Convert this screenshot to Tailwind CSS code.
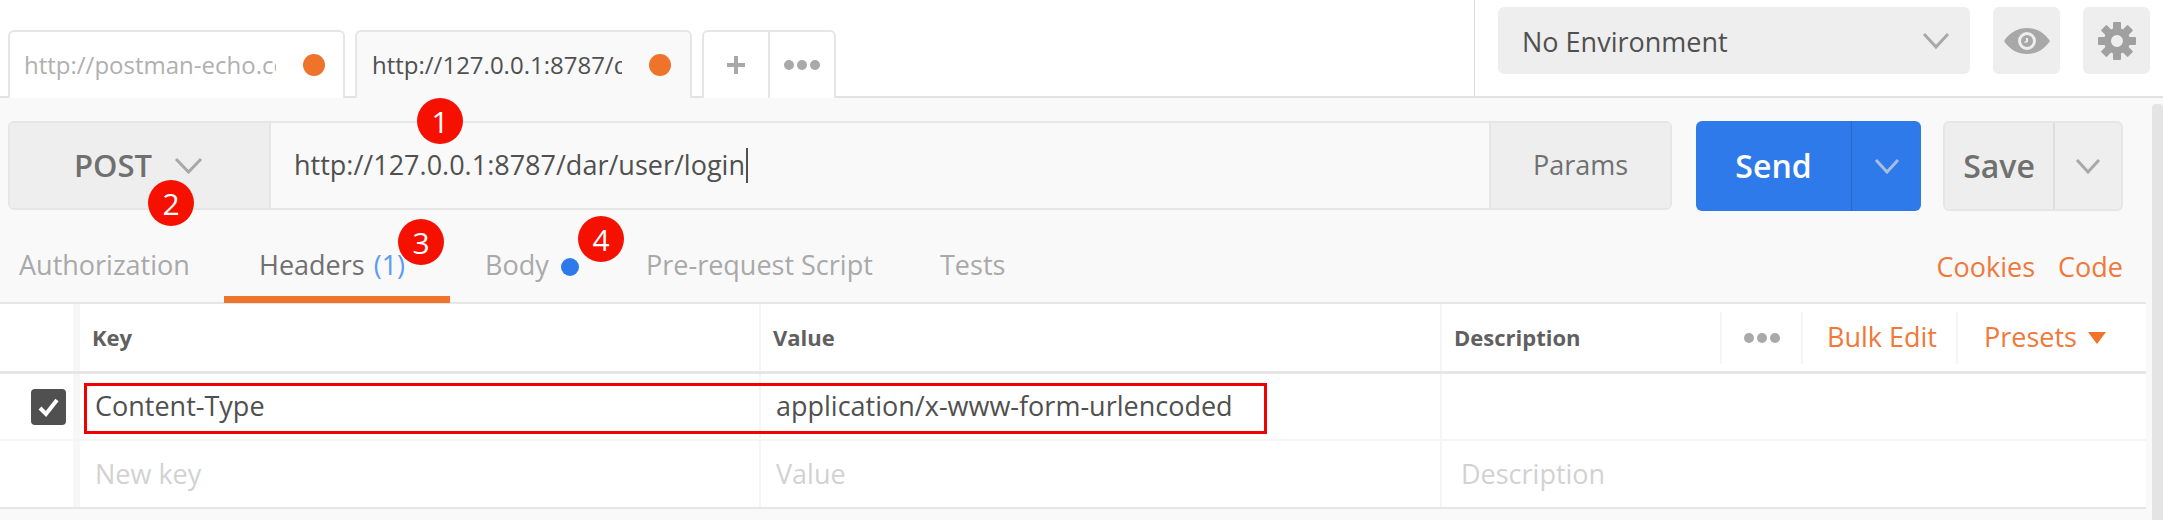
<!DOCTYPE html>
<html><head><meta charset="utf-8">
<script src="https://cdn.jsdelivr.net/npm/@tailwindcss/browser@4"></script>
</head>
<body class="m-0 bg-white">
<div class="relative w-[2163px] h-[520px] overflow-hidden bg-[#f9f9f9] font-['Open_Sans',sans-serif] text-[27px] text-[#505050]">

  <!-- top bar -->
  <div class="flex h-[98px] bg-white border-b-2 border-[#e2e2e2]">
    <div class="flex items-end w-[1475px] pl-2 gap-[10px] border-r border-[#dedede] h-[96px]">
      <div class="flex items-center w-[337px] h-[68px] -mb-[2px] pl-[14px] bg-white border-2 border-b-0 border-[#e6e6e6] rounded-t-md relative z-10">
        <span class="w-[252px] shrink-0 overflow-hidden whitespace-nowrap text-[24px] text-[#b0b0b0]">http://postman-echo.com/post</span>
        <span class="ml-[27px] w-[22px] h-[22px] shrink-0 rounded-full bg-[#f0732c]"></span>
      </div>
      <div class="flex items-center w-[337px] h-[68px] -mb-[2px] pl-[15px] bg-[#f9f9f9] border-2 border-b-0 border-[#e6e6e6] rounded-t-md relative z-10">
        <span class="w-[250px] shrink-0 overflow-hidden whitespace-nowrap text-[24px] text-[#505050]">http://127.0.0.1:8787/dar/user/login</span>
        <span class="ml-[27px] w-[22px] h-[22px] shrink-0 rounded-full bg-[#f0732c]"></span>
      </div>
      <div class="flex h-[68px] -mb-[2px] w-[134px] bg-white border-2 border-b-0 border-[#e6e6e6] rounded-t-md relative z-10">
        <div class="w-[66px] flex items-center justify-center border-r-2 border-[#e6e6e6]">
          <svg width="20" height="20" viewBox="0 0 20 20"><path d="M8 1h4v7h7v4h-7v7H8v-7H1V8h7z" fill="#a9a9a9"/></svg>
        </div>
        <div class="flex-1 flex items-center justify-center gap-[3px]">
          <span class="w-[10px] h-[10px] rounded-full bg-[#a9a9a9]"></span><span class="w-[10px] h-[10px] rounded-full bg-[#a9a9a9]"></span><span class="w-[10px] h-[10px] rounded-full bg-[#a9a9a9]"></span>
        </div>
      </div>
    </div>
    <div class="flex items-start pt-[7px] pl-[23px] gap-[23px]">
      <div class="flex items-center justify-between w-[472px] h-[67px] rounded-md bg-[#eeeeee] pl-[24px] pr-[20px]">
        <span class="pt-[3px]">No Environment</span>
        <svg width="28" height="18" viewBox="0 0 28 18"><path d="M2 2l12 13L26 2" fill="none" stroke="#a8a8a8" stroke-width="3"/></svg>
      </div>
      <div class="flex items-center justify-center w-[67px] h-[67px] rounded-md bg-[#eeeeee]">
        <svg width="46" height="26" viewBox="0 0 46 26"><path fill-rule="evenodd" d="M0 13C6 4 14 0 23 0s17 4 23 13c-6 9-14 13-23 13S6 22 0 13zm23-9a9 9 0 1 0 0 18 9 9 0 0 0 0-18z" fill="#a8a8a8"/><path fill-rule="evenodd" d="M23 7a6 6 0 1 0 0 12 6 6 0 0 0 0-12zm1 3v4l-3 1-1-1 2-1v-3z" fill="#a8a8a8"/></svg>
      </div>
      <div class="flex items-center justify-center w-[67px] h-[67px] rounded-md bg-[#eeeeee]">
        <svg width="40" height="40" viewBox="0 0 40 40"><g fill="#a0a0a0"><path fill-rule="evenodd" d="M20 7a13 13 0 1 0 0 26 13 13 0 0 0 0-26zm0 7a6 6 0 1 1 0 12 6 6 0 0 1 0-12z"/><rect x="16" y="1" width="8" height="9" rx="1"/><rect x="16" y="30" width="8" height="9" rx="1"/><rect x="1" y="16" width="9" height="8" rx="1"/><rect x="30" y="16" width="9" height="8" rx="1"/><rect x="16" y="1" width="8" height="9" rx="1" transform="rotate(45 20 20)"/><rect x="16" y="30" width="8" height="9" rx="1" transform="rotate(45 20 20)"/><rect x="1" y="16" width="9" height="8" rx="1" transform="rotate(45 20 20)"/><rect x="30" y="16" width="9" height="8" rx="1" transform="rotate(45 20 20)"/></g></svg>
      </div>
    </div>
  </div>

  <!-- scrollbar -->
  <div class="absolute right-0 top-[104px] w-[11px] h-[416px] rounded-t bg-[#e4e4e4]"></div>

  <div class="w-[2146px]">
    <!-- request row -->
    <div class="flex h-[90px] mt-[23px] pl-2">
      <div class="flex w-[1664px] h-[89px] border-2 border-[#e6e6e6] rounded-md overflow-hidden">
        <div class="flex items-center w-[261px] bg-[#eeeeee] border-r-2 border-[#e6e6e6] pl-[64px] shrink-0">
          <span class="text-[31px] font-semibold text-[#707070]">POST</span>
          <svg class="ml-[22px]" width="29" height="17" viewBox="0 0 29 17"><path d="M2 2l12.500 13L27 2" fill="none" stroke="#a8a8a8" stroke-width="3"/></svg>
        </div>
        <div class="flex items-center flex-1 pl-[23px]">
          <span class="whitespace-nowrap">http://127.0.0.1:8787/dar/user/login</span><span class="w-[2px] h-[35px] bg-[#505050] ml-px"></span>
        </div>
        <div class="flex items-center justify-center w-[181px] bg-[#eeeeee] border-l-2 border-[#e6e6e6] text-[#707070]">Params</div>
      </div>
      <div class="flex w-[225px] h-[90px] ml-[24px] rounded-md bg-[#2f7aeb] text-white">
        <div class="flex items-center justify-center w-[156px] border-r border-[#2a69c8] text-[32px] font-semibold">Send</div>
        <div class="flex items-center justify-center flex-1">
          <svg width="26" height="16" viewBox="0 0 26 16"><path d="M2 2l11 12L24 2" fill="none" stroke="#a9bedd" stroke-width="3"/></svg>
        </div>
      </div>
      <div class="flex w-[180px] h-[90px] ml-[22px] rounded-md bg-[#eeeeee] border-2 border-[#e6e6e6]">
        <div class="flex items-center justify-center w-[110px] border-r-2 border-[#dddddd] text-[32px] font-semibold text-[#707070]">Save</div>
        <div class="flex items-center justify-center flex-1">
          <svg width="26" height="16" viewBox="0 0 26 16"><path d="M2 2l11 12L24 2" fill="none" stroke="#a8a8a8" stroke-width="3"/></svg>
        </div>
      </div>
    </div>

    <!-- tabs row -->
    <div class="flex items-stretch h-[93px] border-b-2 border-[#e6e6e6] text-[#a9a9a9]">
      <div class="pl-[19px] pt-[34px] w-[224px]">Authorization</div>
      <div class="w-[226px] h-[92px] -mb-px pl-[35px] pt-[34px] border-b-[7px] border-[#f0732c] text-[#707070] whitespace-nowrap">Headers <span class="ml-[2px] text-[#5a9cf0]">(1)</span></div>
      <div class="flex items-start pl-[35px] pt-[34px] w-[196px]">Body<span class="w-[18px] h-[18px] rounded-full bg-[#2f7aeb] ml-[12px] mt-[13px]"></span></div>
      <div class="pt-[34px] w-[294px] whitespace-nowrap">Pre-request Script</div>
      <div class="pt-[34px]">Tests</div>
      <div class="ml-auto flex gap-[23px] pt-[36px] pr-[23px] text-[#f0783a]"><span>Cookies</span><span>Code</span></div>
    </div>

    <!-- table -->
    <div class="bg-white border-b-2 border-[#e6e6e6]">
      <div class="grid grid-cols-[80px_681px_681px_704px] h-[70px] border-b-[3px] border-[#e6e6e6] font-bold text-[22px] text-[#606060]">
        <div class="border-r-[7px] border-[#f7f7f7]"></div>
        <div class="flex items-center pl-[12px] border-r-2 border-[#f5f5f5]">Key</div>
        <div class="flex items-center pl-[12px] border-r-2 border-[#f5f5f5]">Value</div>
        <div class="flex items-center pl-[12px]">
          <span class="w-[266px]">Description</span>
          <div class="flex items-center justify-center gap-[3px] w-[83px] h-[52px] border-x-2 border-[#f5f5f5]">
            <span class="w-[10px] h-[10px] rounded-full bg-[#a9a9a9]"></span><span class="w-[10px] h-[10px] rounded-full bg-[#a9a9a9]"></span><span class="w-[10px] h-[10px] rounded-full bg-[#a9a9a9]"></span>
          </div>
          <div class="flex items-center w-[155px] h-[52px] pl-[24px] border-r-2 border-[#f5f5f5] text-[27px] font-normal text-[#f0783a] whitespace-nowrap">Bulk Edit</div>
          <div class="flex items-center pl-[26px] text-[27px] font-normal text-[#f0783a]">Presets<svg class="ml-[11px]" width="18" height="12" viewBox="0 0 18 12"><path d="M0 0h18L9 12z" fill="#f0732c"/></svg></div>
        </div>
      </div>
      <div class="grid grid-cols-[80px_681px_681px_704px] h-[67px] border-b-2 border-[#f5f5f5]">
        <div class="flex items-center justify-end pr-[7px] border-r-[7px] border-[#f7f7f7]">
          <span class="flex items-center justify-center w-[35px] h-[36px] rounded-[4px] bg-[#505050]">
            <svg width="23" height="20" viewBox="0 0 23 20"><path d="M3 11l6 6L20 3" fill="none" stroke="#fff" stroke-width="4"/></svg>
          </span>
        </div>
        <div class="flex items-center pl-[15px] border-r-2 border-[#f5f5f5]">Content-Type</div>
        <div class="flex items-center pl-[15px] border-r-2 border-[#f5f5f5] whitespace-nowrap">application/x-www-form-urlencoded</div>
        <div></div>
      </div>
      <div class="grid grid-cols-[80px_681px_681px_704px] h-[66px] text-[#d2d2d2]">
        <div class="border-r-[7px] border-[#f7f7f7]"></div>
        <div class="flex items-center pl-[15px] border-r-2 border-[#f5f5f5]">New key</div>
        <div class="flex items-center pl-[15px] border-r-2 border-[#f5f5f5]">Value</div>
        <div class="flex items-center pl-[19px]">Description</div>
      </div>
    </div>
  </div>

  <!-- annotations -->
  <div class="absolute left-[84px] top-[383px] w-[1183px] h-[51px] border-[3px] border-[#f00000]"></div>
  <div class="absolute left-[417px] top-[98px] w-[46px] h-[46px] rounded-full bg-[#f61000] flex items-center justify-center text-white text-[30px]">1</div>
  <div class="absolute left-[148px] top-[180px] w-[46px] h-[46px] rounded-full bg-[#f61000] flex items-center justify-center text-white text-[30px]">2</div>
  <div class="absolute left-[398px] top-[219px] w-[46px] h-[46px] rounded-full bg-[#f61000] flex items-center justify-center text-white text-[30px]">3</div>
  <div class="absolute left-[578px] top-[216px] w-[46px] h-[46px] rounded-full bg-[#f61000] flex items-center justify-center text-white text-[30px]">4</div>
</div>
</body></html>
